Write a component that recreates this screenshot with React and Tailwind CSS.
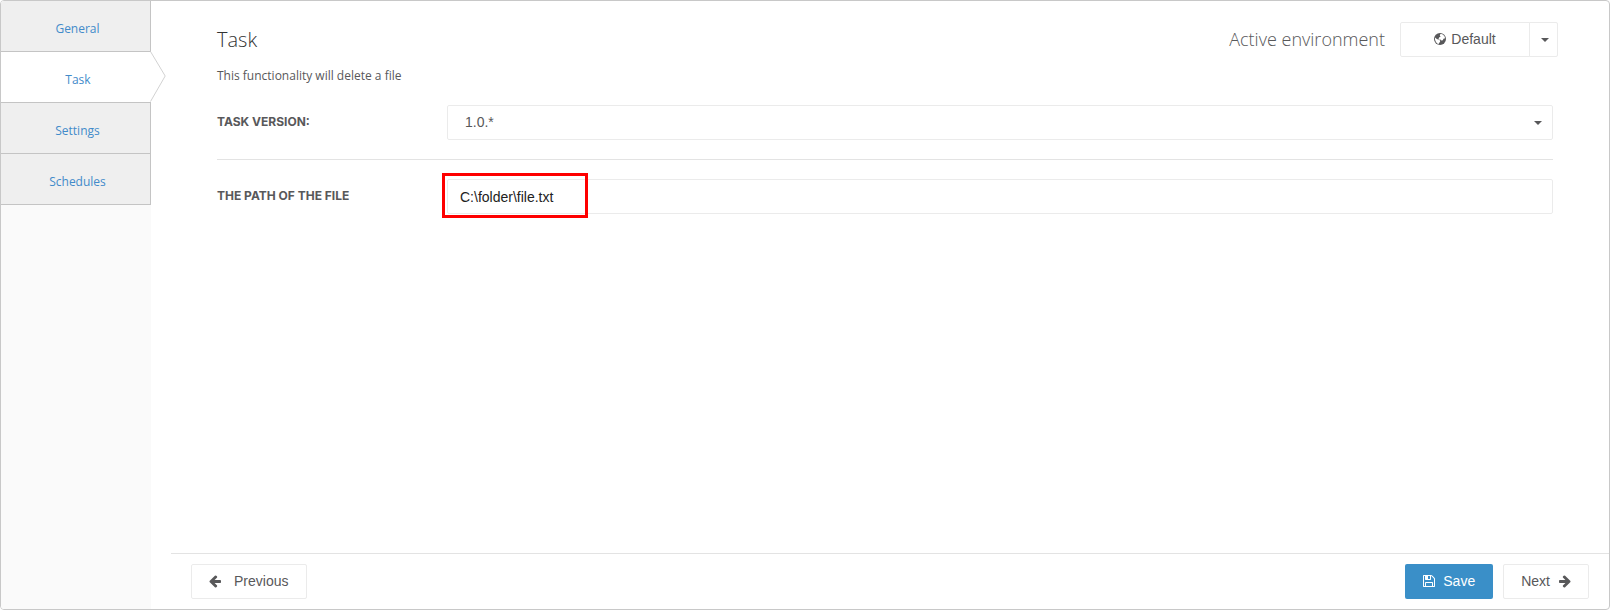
import { useState } from "react";

const NAV_ITEMS = ["General", "Task", "Settings", "Schedules"];

const BUTTON =
  "flex h-[35px] items-center rounded-xs border border-[#ebebeb] bg-white pb-[2px] font-['Liberation_Sans',sans-serif] text-[14px] leading-5 text-[#58585a]";

function ArrowLeftIcon({ className }) {
  return (
    <svg viewBox="0 0 1792 1792" fill="currentColor" className={className} aria-hidden="true">
      <path d="M1664 896v128q0 53-32.5 90.5t-84.5 37.5h-704l293 294q38 36 38 90t-38 90l-75 76q-37 37-90 37-52 0-91-37l-651-652q-37-37-37-90 0-52 37-91l651-650q38-38 91-38 52 0 90 38l75 74q38 38 38 91t-38 91l-293 293h704q52 0 84.5 37.5t32.5 90.5z" />
    </svg>
  );
}

function SaveIcon({ className }) {
  return (
    <svg viewBox="0 0 1792 1792" fill="currentColor" className={className} aria-hidden="true">
      <path d="M512 1536h768v-384h-768v384zm896 0h128v-896q0-14-10-38.5t-20-34.5l-281-281q-10-10-34-20t-39-10v416q0 40-28 68t-68 28h-576q-40 0-68-28t-28-68v-416h-128v1280h128v-416q0-40 28-68t68-28h832q40 0 68 28t28 68v416zm-384-928v-320q0-13-9.5-22.5t-22.5-9.5h-192q-13 0-22.5 9.5t-9.5 22.5v320q0 13 9.5 22.5t22.5 9.5h192q13 0 22.5-9.5t9.5-22.5zm640 32v928q0 40-28 68t-68 28h-1344q-40 0-68-28t-28-68v-1344q0-40 28-68t68-28h928q40 0 88 20t76 48l280 280q28 28 48 76t20 88z" />
    </svg>
  );
}

function GlobeIcon({ className }) {
  return (
    <svg viewBox="0 0 24 24" className={className} aria-hidden="true">
      <circle cx="12" cy="12" r="12" fill="currentColor" />
      <path
        fill="#fff"
        d="M12 2.4 16 1.8l4.8 4.3 1.4 4.2-3.3 1-1.2 3.1-3.1.8-1.7-2-2.4.4-1.4-2.7 2-2.8 2.6-.5-1.9-1.8zM2 8.8l2.2 2.3 2.4 1.2 3 .6 3 2.4-.9 3.1-1.8 1.4-.7 2.5-3.4-1.9-2.4-3.5-1.4-3.8z"
      />
    </svg>
  );
}

function Caret({ className }) {
  return (
    <svg viewBox="0 0 8 4" fill="currentColor" className={className} aria-hidden="true">
      <path d="M0 0h8L4 4z" />
    </svg>
  );
}

function NavItem({ label, active, onSelect }) {
  return (
    <li className="relative">
      <a
        href={`#${label.toLowerCase()}`}
        onClick={onSelect}
        aria-current={active ? "page" : undefined}
        className={`flex h-[51px] items-center justify-center border-b border-[#c4c4c4] pt-[6px] pl-1 text-[12px] leading-4 text-[#428bca] ${
          active ? "bg-white" : "border-r bg-[#efefef]"
        }`}
      >
        {label}
      </a>
      {active && (
        <svg
          viewBox="0 0 16 51"
          className="absolute -top-px left-full -ml-px h-[51px] w-4"
          fill="none"
          aria-hidden="true"
        >
          <path d="M0 1 15 25 0 50z" fill="#fff" />
          <path d="M.5 .5 15.2 25 .5 50.5" stroke="#d2d2d2" />
        </svg>
      )}
    </li>
  );
}

function Field({ id, label, children }) {
  return (
    <div className="flex items-center">
      <label
        htmlFor={id}
        className="w-[230px] shrink-0 pb-[2px] font-['Inter',sans-serif] text-[12px] leading-4 font-bold text-[#58585a] uppercase"
      >
        {label}
      </label>
      <div className="relative flex-1">{children}</div>
    </div>
  );
}

export default function App() {
  const [current, setCurrent] = useState("Task");
  const [path, setPath] = useState("C:\\folder\\file.txt");

  return (
    <div className="flex min-h-screen overflow-hidden rounded border border-[#c8c8c8] bg-white font-['Open_Sans',sans-serif] text-[#58585a]">
      <nav className="w-[150px] shrink-0 bg-[#fafafa]">
        <ul>
          {NAV_ITEMS.map((item) => (
            <NavItem
              key={item}
              label={item}
              active={item === current}
              onSelect={() => setCurrent(item)}
            />
          ))}
        </ul>
      </nav>

      <div className="flex min-w-0 flex-1 flex-col">
        <main className="flex-1 pt-[21px] pl-[66px]">
          <header className="flex items-center justify-between pr-[51px]">
            <h1 className="text-[20px] leading-[35px] font-light text-[#333]">Task</h1>
            <div className="flex items-center gap-[15px]">
              <span className="text-[18px] leading-[35px] font-light">Active environment</span>
              <div className="flex">
                <button type="button" className={`${BUTTON} w-[130px] justify-center gap-[5px] rounded-r-none`}>
                  <GlobeIcon className="size-3" />
                  Default
                </button>
                <button
                  type="button"
                  aria-label="Choose environment"
                  className={`${BUTTON} -ml-px w-[29px] justify-center rounded-l-none pt-[2px] pl-[2px]`}
                >
                  <Caret className="h-1 w-2" />
                </button>
              </div>
            </div>
          </header>

          <form className="pr-14" onSubmit={(event) => event.preventDefault()}>
            <p className="mt-[9px] text-[12px] leading-5">This functionality will delete a file</p>
            <div className="mt-[19px]">
              <Field id="task-version" label="Task version:">
                <select
                  id="task-version"
                  className="block h-[35px] w-full appearance-none rounded-xs border border-[#ebebeb] bg-white px-[17px] pb-[2px] font-['Liberation_Sans',sans-serif] text-[14px] leading-5"
                >
                  <option>1.0.*</option>
                </select>
                <Caret className="pointer-events-none absolute top-4 right-[11px] h-1 w-2" />
              </Field>
            </div>
            <hr className="my-[19px] border-[#e3e3e3]" />
            <Field id="file-path" label="The path of the file">
              <input
                id="file-path"
                type="text"
                value={path}
                onChange={(event) => setPath(event.target.value)}
                className="block h-[35px] w-full rounded-xs border border-[#ebebeb] px-3 font-['Liberation_Sans',sans-serif] text-[14px] leading-5 text-[#222]"
              />
              <div className="pointer-events-none absolute -top-[6px] -left-[5px] h-[45px] w-[146px] border-3 border-[#fe0000]" />
            </Field>
          </form>
        </main>

        <footer className="ml-5 flex items-center border-t border-[#e3e3e3] py-[10px] pr-5 pl-5">
          <button type="button" className={`${BUTTON} gap-3 pr-[18px] pl-4`}>
            <ArrowLeftIcon className="size-[14px]" />
            Previous
          </button>
          <button
            type="button"
            className="ml-auto flex h-[35px] items-center gap-[7px] rounded-xs bg-[#3a8fc8] pr-[18px] pb-[2px] pl-[17px] font-['Liberation_Sans',sans-serif] text-[14px] leading-5 text-white"
          >
            <SaveIcon className="size-[14px]" />
            Save
          </button>
          <button type="button" className={`${BUTTON} ml-[10px] gap-2 pr-4 pl-[17px]`}>
            Next
            <ArrowLeftIcon className="size-[14px] -scale-x-100" />
          </button>
        </footer>
      </div>
    </div>
  );
}
